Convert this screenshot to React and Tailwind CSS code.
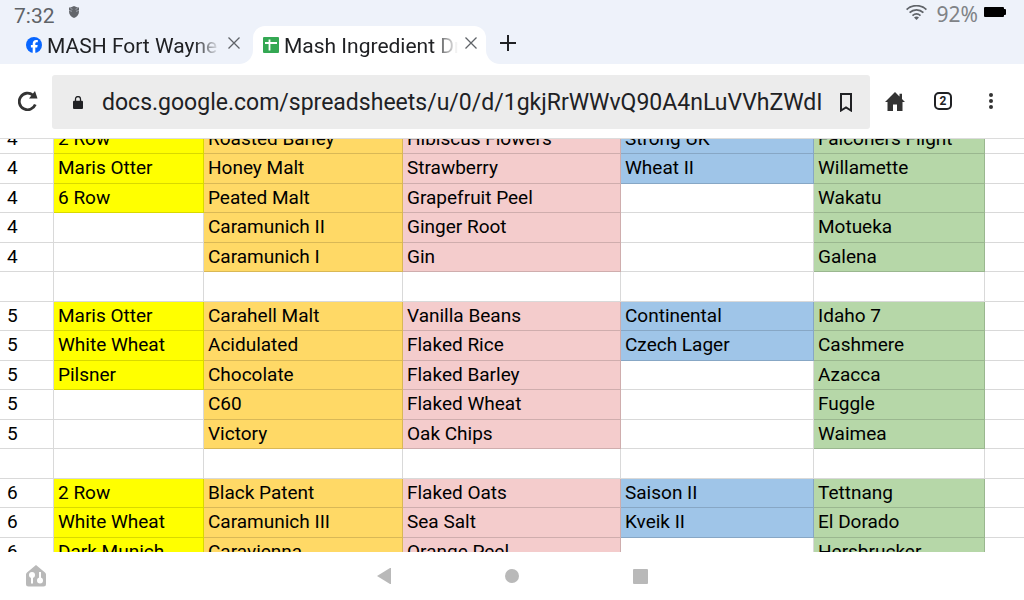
import React from 'react';

const columns = [
  { width: 'w-[54px]', fill: '' },
  { width: 'w-[150px]', fill: 'bg-[#ffff00]' },
  { width: 'w-[199px]', fill: 'bg-[#ffd966]' },
  { width: 'w-[218px]', fill: 'bg-[#f4cccc]' },
  { width: 'w-[193px]', fill: 'bg-[#9fc5e8]' },
  { width: 'w-[171px]', fill: 'bg-[#b6d7a8]' },
  { width: '', fill: '' },
];

const rows = [
  ['4', '2 Row', 'Roasted Barley', 'Hibiscus Flowers', 'Strong UK', 'Falconers Flight', ''],
  ['4', 'Maris Otter', 'Honey Malt', 'Strawberry', 'Wheat II', 'Willamette', ''],
  ['4', '6 Row', 'Peated Malt', 'Grapefruit Peel', '', 'Wakatu', ''],
  ['4', '', 'Caramunich II', 'Ginger Root', '', 'Motueka', ''],
  ['4', '', 'Caramunich I', 'Gin', '', 'Galena', ''],
  ['', '', '', '', '', '', ''],
  ['5', 'Maris Otter', 'Carahell Malt', 'Vanilla Beans', 'Continental', 'Idaho 7', ''],
  ['5', 'White Wheat', 'Acidulated', 'Flaked Rice', 'Czech Lager', 'Cashmere', ''],
  ['5', 'Pilsner', 'Chocolate', 'Flaked Barley', '', 'Azacca', ''],
  ['5', '', 'C60', 'Flaked Wheat', '', 'Fuggle', ''],
  ['5', '', 'Victory', 'Oak Chips', '', 'Waimea', ''],
  ['', '', '', '', '', '', ''],
  ['6', '2 Row', 'Black Patent', 'Flaked Oats', 'Saison II', 'Tettnang', ''],
  ['6', 'White Wheat', 'Caramunich III', 'Sea Salt', 'Kveik II', 'El Dorado', ''],
  ['6', 'Dark Munich', 'Caravienna', 'Orange Peel', '', 'Hersbrucker', ''],
];

function CloseIcon() {
  return (
    <svg className="h-3 w-3" viewBox="0 0 12 12" fill="none" stroke="#5f6368" strokeWidth="1.3">
      <path d="M0.5 0.5l11 11M11.5 0.5l-11 11" />
    </svg>
  );
}

function FacebookIcon() {
  return (
    <svg className="h-4 w-4 shrink-0" viewBox="0 0 16 16">
      <circle cx="8" cy="8" r="8" fill="#0866ff" />
      <path d="M6.7 15.9V10.4H4.9V7.9h1.8V6.8c0-2.6 1.2-3.9 3.6-3.9.5 0 1.2.1 1.5.2v2.2h-.9c-1.200 0-1.600.5-1.600 1.600v1h2.400l-.5 2.500H9.300v5.500z" fill="#fff" />
    </svg>
  );
}

function SheetsIcon() {
  return (
    <svg className="h-4 w-4 shrink-0" viewBox="0 0 16 16">
      <rect width="16" height="16" rx="1" fill="#34a853" />
      <path d="M2 6h12M6.500 2.500v11" stroke="#fff" strokeWidth="1.800" />
    </svg>
  );
}

function StatusBar() {
  return (
    <div className="flex h-[26px] items-start justify-between bg-[#eef2fa] pl-[14px] pr-[18px]">
      <div className="flex items-start gap-[14px]">
        <span className="pt-1 text-[21px] leading-6 text-[#5f6368]">7:32</span>
        <svg className="mt-[6px] h-3 w-[10px]" viewBox="0 0 10 12">
          <path d="M0 1.500C2 1.500 3.500.9 5 0c1.500.9 3 1.500 5 1.500v4C10 8.500 8 11 5 12 2 11 0 8.500 0 5.500z" fill="#63666b" />
          <path d="M0 4.500l3 .8M10 4.500l-3 .8M1.500 2.500l2 .8M8.500 2.500l-2 .8" stroke="#b9bec8" strokeWidth="0.700" />
        </svg>
      </div>
      <div className="flex items-start">
        <svg className="mt-[5px] h-[15px] w-[21px]" viewBox="0 0 21 15" fill="none" stroke="#5f6368" strokeWidth="1.800">
          <path d="M.6 4.600C6-.6 15-.6 20.400 4.600M3.600 7.700c4-3.700 9.800-3.700 13.800 0M6.500 10.600c2.500-2.100 5.500-2.100 8 0" />
          <path d="M8 12.500c1.500-1.300 3.500-1.300 5 0L10.500 15z" fill="#5f6368" stroke="none" />
        </svg>
        <span className="ml-[10px] pt-[2px] font-['Noto_Sans'] text-[21px] leading-6 text-[#808387]">92%</span>
        <svg className="ml-[6px] mt-[7px] h-[10px] w-[22px]" viewBox="0 0 22 10">
          <rect width="20" height="10" rx="1" />
          <rect x="19" y="2" width="3" height="6" rx="1" />
        </svg>
      </div>
    </div>
  );
}

function TabStrip() {
  return (
    <div className="flex h-[38px]">
      <div className="flex w-[253px] items-center rounded-br-[14px] bg-[#eef2fa] pl-[26px] pr-[13px]">
        <FacebookIcon />
        <span className="ml-[5px] flex-1 overflow-hidden whitespace-nowrap pt-[2px] text-[21px] leading-7 text-[#202124] mask-r-from-85%">
          MASH Fort Wayne
        </span>
        <button aria-label="Close MASH Fort Wayne" className="ml-[8px] pb-1"><CloseIcon /></button>
      </div>
      <div className="w-[233px] bg-[#eef2fa]">
        <div className="flex h-full items-center rounded-t-[12px] bg-white pl-[10px] pr-[9px]">
          <SheetsIcon />
          <span className="ml-[5px] flex-1 overflow-hidden whitespace-nowrap pt-[2px] text-[21px] leading-7 text-[#202124] mask-r-from-85%">
            Mash Ingredient Dr
          </span>
          <button aria-label="Close Mash Ingredient Dr" className="ml-[7px] pb-1"><CloseIcon /></button>
        </div>
      </div>
      <div className="flex flex-1 items-center rounded-bl-[14px] bg-[#eef2fa] pl-[14px]">
        <button aria-label="New tab" className="pb-1">
          <svg className="h-4 w-4" viewBox="0 0 16 16" stroke="#202124" strokeWidth="2">
            <path d="M8 0v16M0 8h16" />
          </svg>
        </button>
      </div>
    </div>
  );
}

function Toolbar() {
  return (
    <div className="flex h-[74px] items-center bg-white pb-[1px] pl-[18px] pr-[31px] pt-[1px]">
      <button aria-label="Reload">
        <svg className="h-5 w-5" viewBox="0 0 20 20">
          <path d="M17.300 13.500A8.300 8.300 0 1 1 14.800 4" fill="none" stroke="#333" strokeWidth="2.800" />
          <path d="M17 0l2.500 7.500H11z" fill="#333" />
        </svg>
      </button>
      <div className="ml-[14px] mt-[2px] flex h-[54px] flex-1 items-center rounded-[3px] bg-[#ececec] pl-[21px] pr-[18px]">
        <svg className="h-[13px] w-[10px] shrink-0" viewBox="0 0 10 13">
          <path d="M2.500 5.500V3a2.500 2.500 0 0 1 5 0v2.500" fill="none" stroke="#202124" strokeWidth="1.300" />
          <rect y="4.700" width="10" height="8.300" rx="1" fill="#202124" />
        </svg>
        <input
          aria-label="Address"
          className="ml-[19px] min-w-0 flex-1 bg-transparent pt-[2px] text-[23px] leading-8 text-[#202124] outline-none"
          defaultValue="docs.google.com/spreadsheets/u/0/d/1gkjRrWWvQ90A4nLuVVhZWdI"
        />
        <button aria-label="Bookmark" className="ml-[17px]">
          <svg className="h-[19px] w-3" viewBox="0 0 12 19" fill="none" stroke="#202124" strokeWidth="2">
            <path d="M1 1h10v16.500L6 14.500 1 17.500z" />
          </svg>
        </button>
      </div>
      <button aria-label="Home" className="ml-[15px]">
        <svg className="h-[19px] w-5" viewBox="0 0 20 19">
          <path d="M10 0L0 10h2.500v9H8v-6.500h4V19h5.500v-9H20l-3-3V1.800h-2.500v2.700z" fill="#333" />
        </svg>
      </button>
      <button aria-label="Open tabs" className="ml-[29px] flex h-[18px] w-[18px] items-center justify-center rounded-[5px] border-2 border-[#202124] text-[12px] font-bold leading-3 text-[#202124]">
        2
      </button>
      <button aria-label="Menu" className="ml-[37px]">
        <svg className="h-4 w-1" viewBox="0 0 4 16" fill="#333">
          <circle cx="2" cy="2" r="2" />
          <circle cx="2" cy="8" r="2" />
          <circle cx="2" cy="14" r="2" />
        </svg>
      </button>
    </div>
  );
}

function Sheet() {
  return (
    <div className="min-h-0 flex-1 overflow-hidden border-t border-[#dcdcdc]">
      {/* scrolled down by half a row */}
      <table className="-mt-[14px] w-full table-fixed border-separate border-spacing-0 text-left text-[19px] leading-6 text-black">
        <colgroup>
          {columns.map((col, i) => (
            <col key={i} className={col.width} />
          ))}
        </colgroup>
        <tbody>
          {rows.map((row, r) => (
            <tr key={r} className={r % 2 ? 'h-[30px]' : 'h-[29px]'}>
              {row.map((text, c) => (
                <td
                  key={c}
                  className={`overflow-hidden whitespace-nowrap border-b border-r border-black/15 p-0 pb-[1px] align-middle last:border-r-0 ${
                    c === 0 ? 'pl-[7px]' : 'pl-1'
                  } ${text ? columns[c].fill : ''}`}
                >
                  {text}
                </td>
              ))}
            </tr>
          ))}
        </tbody>
      </table>
    </div>
  );
}

function NavBar() {
  return (
    <div className="grid h-12 shrink-0 grid-cols-8 items-center bg-white">
      <button aria-label="Smart home" className="col-start-1 row-start-1 ml-[26px] justify-self-start">
        <svg className="h-[22px] w-5" viewBox="0 0 20 22">
          <path d="M10 0l9 7.500c.7.600 1 1.200 1 2V19a2.500 2.500 0 0 1-2.500 2.500h-15A2.500 2.500 0 0 1 0 19V9.500c0-.8.300-1.400 1-2z" fill="#b9b9b9" />
          <circle cx="6" cy="10" r="3" fill="#fff" />
          <circle cx="14" cy="15.500" r="3" fill="#fff" />
          <path d="M6 11v7.500M14 7v8" stroke="#fff" strokeWidth="2" />
        </svg>
      </button>
      <button aria-label="Back" className="col-start-3 col-end-5 row-start-1 justify-self-center">
        <svg className="h-4 w-[14px]" viewBox="0 0 14 16"><path d="M0 8L13 0h1v16h-1z" fill="#b9b9b9" /></svg>
      </button>
      <button aria-label="Home screen" className="col-start-4 col-end-6 row-start-1 h-[14px] w-[14px] justify-self-center rounded-full bg-[#b9b9b9]" />
      <button aria-label="Recent apps" className="col-start-5 col-end-7 row-start-1 h-[15px] w-[15px] justify-self-center rounded-[1px] bg-[#b9b9b9]" />
    </div>
  );
}

function App() {
  return (
    <div className="flex h-screen flex-col overflow-hidden bg-white font-[Roboto,sans-serif]">
      <header className="shrink-0">
        <StatusBar />
        <TabStrip />
        <Toolbar />
      </header>
      <Sheet />
      <NavBar />
    </div>
  );
}

export default App;
